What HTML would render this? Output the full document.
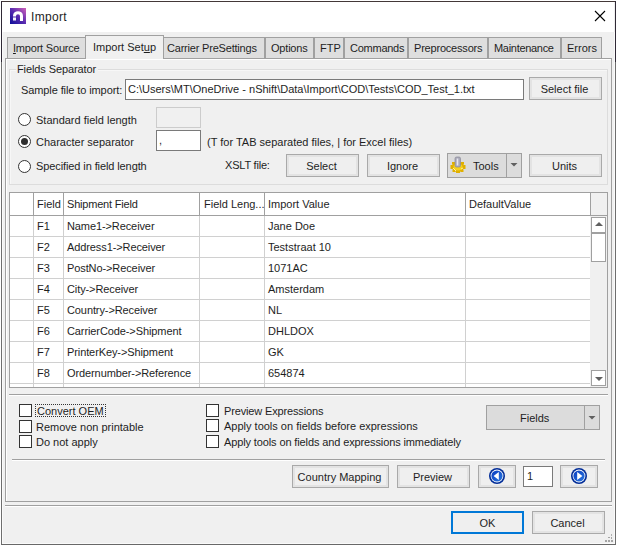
<!DOCTYPE html>
<html><head><meta charset="utf-8">
<style>
*{margin:0;padding:0;box-sizing:border-box}
html,body{width:618px;height:546px;overflow:hidden;background:#fff}
body{position:relative;font-family:"Liberation Sans",sans-serif;font-size:11px;color:#1e1e1e}
.a{position:absolute}
.t{position:absolute;white-space:nowrap;line-height:13px;height:13px;letter-spacing:0px}
.win{position:absolute;left:1px;top:1px;width:615px;height:544px;border:1px solid #6e6e6e;border-top-color:#2b2b2b;background:#f0f0f0}
.title{position:absolute;left:0;top:0;width:613px;height:31px;background:#fff}
.tab{position:absolute;top:37px;height:21px;background:#dedede;border:1px solid #a0a0a0;border-bottom:none}
.tab.sel{top:35px;height:24px;background:#f0f0f0;z-index:3}
.panel{position:absolute;left:5px;top:58px;width:607px;height:444px;border:1px solid #a0a0a0;background:#f0f0f0;box-shadow:inset 1px 1px 0 #fff}
.gb{position:absolute;border:1px solid #dcdcdc;box-shadow:inset 1px 1px 0 #f7f7f7}
.btn{position:absolute;background:#efefef;border:1px solid #a9a9a9;text-align:center;box-shadow:inset 0 0 0 2px #e3e3e3}
.inp{position:absolute;background:#fff;border:1px solid #7a7a7a}
.radio{position:absolute;width:13px;height:13px;border:1px solid #333;border-radius:50%;background:#fff}
.chk{position:absolute;width:13px;height:13px;border:1px solid #333;background:#fff}
.grid{position:absolute;left:9px;top:192px;width:599px;height:196px;border:1px solid #a0a0a0;background:#fff;overflow:hidden}
.vl{position:absolute;width:1px;background:#d0d0d0}
.hl{position:absolute;height:1px;background:#d0d0d0}
</style></head><body>
<div class="a" style="left:1px;top:1px;width:615px;height:544px;background:#f0f0f0"></div>
<div class="a" style="left:1px;top:1px;width:615px;height:1px;background:#433838"></div>
<div class="a" style="left:1px;top:1px;width:1px;height:61px;background:#2f2936"></div>
<div class="a" style="left:615px;top:1px;width:1px;height:61px;background:#2f2936"></div>
<div class="a" style="left:1px;top:62px;width:1px;height:483px;background:#6e6e6e"></div>
<div class="a" style="left:615px;top:62px;width:1px;height:483px;background:#6e6e6e"></div>
<div class="a" style="left:1px;top:544px;width:615px;height:1px;background:#686868"></div>
<div class="a" style="left:2px;top:32px;width:1px;height:512px;background:#fafafa"></div>
<div class="a" style="left:614px;top:32px;width:1px;height:512px;background:#fafafa"></div>
<div class="a" style="left:2px;top:543px;width:613px;height:1px;background:#fafafa"></div>
<div class="a" style="left:2px;top:2px;width:612px;height:30px;background:#fff"></div>
<!-- title icon -->
<svg class="a" style="left:10px;top:8px" width="16" height="16" viewBox="0 0 16 16">
<defs><linearGradient id="ig" x1="1" y1="0" x2="0" y2="1"><stop offset="0" stop-color="#d060b8"/><stop offset="0.5" stop-color="#5a2cb0"/><stop offset="1" stop-color="#0c0c98"/></linearGradient></defs>
<rect width="16" height="16" fill="url(#ig)"/>
<path d="M4.5 8C4.5 3.5 11.5 3.5 11.5 8V13" stroke="#fff" stroke-width="3" fill="none"/><rect x="3" y="7.5" width="3" height="2.3" fill="#fff" opacity="0.5"/><rect x="3" y="9.8" width="3" height="2.7" fill="#fff" opacity="0.95"/></svg>
<div class="t" style="left:31px;top:11px;font-size:12px;letter-spacing:0.3px">Import</div>
<!-- close -->
<svg class="a" style="left:594px;top:10px" width="12" height="12" viewBox="0 0 12 12"><path d="M1 1L11 11M11 1L1 11" stroke="#000" stroke-width="1.1"/></svg>

<!-- panel -->
<div class="panel"></div>
<!-- tabs -->
<div class="tab" style="left:7px;width:79px"><div class="t" style="left:5px;top:4px;letter-spacing:-0.2px"><u>I</u>mport Source</div></div>
<div class="tab sel" style="left:85px;width:79px"><div class="t" style="left:7px;top:5px;letter-spacing:0px">Import Set<u>u</u>p</div></div>
<div class="tab" style="left:163px;width:102px"><div class="t" style="left:3px;top:4px;letter-spacing:-0.2px">Carrier PreSettin<u>g</u>s</div></div>
<div class="tab" style="left:265px;width:49px"><div class="t" style="left:5px;top:4px;letter-spacing:-0.2px">Options</div></div>
<div class="tab" style="left:314px;width:30px"><div class="t" style="left:5px;top:4px">FTP</div></div>
<div class="tab" style="left:344px;width:64px"><div class="t" style="left:5px;top:4px;letter-spacing:-0.25px">Commands</div></div>
<div class="tab" style="left:408px;width:80px"><div class="t" style="left:5px;top:4px;letter-spacing:-0.2px">Preprocessors</div></div>
<div class="tab" style="left:488px;width:73px"><div class="t" style="left:5px;top:4px;letter-spacing:-0.3px">Maintenance</div></div>
<div class="tab" style="left:561px;width:41px"><div class="t" style="left:5px;top:4px">Errors</div></div>

<!-- Fields Separator groupbox -->
<div class="gb" style="left:9px;top:69px;width:599px;height:116px"></div>
<div class="t" style="left:16px;top:63px;padding:0 2px 0 1px;letter-spacing:-0.1px;background:#f0f0f0">Fields Separator</div>
<div class="t" style="left:21px;top:84px;letter-spacing:-0.1px">Sample file to import:</div>
<div class="inp" style="left:125px;top:79px;width:399px;height:21px"><div class="t" style="left:2px;top:3px;letter-spacing:0">C:\Users\MT\OneDrive - nShift\Data\Import\COD\Tests\COD_Test_1.txt</div></div>
<div class="btn" style="left:529px;top:77px;width:73px;height:23px"><div class="t" style="position:static;line-height:21px;height:21px;padding-top:1px;padding-right:2px">Select file</div></div>

<div class="radio" style="left:18px;top:113px"></div>
<div class="t" style="left:36px;top:114px">Standard field length</div>
<div class="a" style="left:156px;top:107px;width:45px;height:21px;border:1px solid #cccccc;background:#f0f0f0"></div>
<div class="radio" style="left:18px;top:135px"><div class="a" style="left:2px;top:2px;width:7px;height:7px;border-radius:50%;background:#2e2e2e"></div></div>
<div class="t" style="left:36px;top:136px">Character separator</div>
<div class="inp" style="left:156px;top:130px;width:45px;height:21px"><div class="t" style="left:2px;top:3px">,</div></div>
<div class="t" style="left:207px;top:136px;letter-spacing:0px">(T for TAB separated files, | for Excel files)</div>
<div class="radio" style="left:18px;top:160px"></div>
<div class="t" style="left:36px;top:160px;letter-spacing:-0.1px">Specified in field length</div>
<div class="t" style="left:225px;top:159px;letter-spacing:-0.2px">XSLT file:</div>
<div class="btn" style="left:286px;top:154px;width:73px;height:23px"><div class="t" style="position:static;line-height:21px;height:21px;padding-top:1px;padding-right:2px">Select</div></div>
<div class="btn" style="left:367px;top:154px;width:73px;height:23px"><div class="t" style="position:static;line-height:21px;height:21px;padding-top:1px;padding-right:2px">Ignore</div></div>
<div class="btn" style="left:447px;top:153px;width:75px;height:25px;background:#dcdcdc;border-color:#a0a0a0;box-shadow:none"></div>
<div class="a" style="left:506px;top:154px;width:1px;height:23px;background:#a0a0a0"></div>
<div class="t" style="left:473px;top:160px">Tools</div>
<svg class="a" style="left:510px;top:163px" width="8" height="4" viewBox="0 0 8 4"><path d="M0.5 0H7.5L4 3.5Z" fill="#606060"/></svg>
<!-- tools icon -->
<svg class="a" style="left:450px;top:156px" width="17" height="18" viewBox="0 0 17 18">
<g fill="#e0b000">
<ellipse cx="8" cy="11" rx="6.3" ry="5"/>
<rect x="0.5" y="9" width="2" height="4"/><rect x="13.5" y="9" width="2" height="4"/>
<rect x="6" y="15" width="4" height="2"/><rect x="2.5" y="14" width="3" height="2"/><rect x="10.5" y="14" width="3" height="2"/>
<rect x="2" y="6" width="3" height="2.5"/><rect x="11" y="6" width="3" height="2.5"/>
</g>
<ellipse cx="8" cy="11" rx="4.5" ry="3.5" fill="#f4d020"/>
<path d="M3 12l3 3M11 13l2-1" stroke="#fff4a0" stroke-width="1"/>
<rect x="5" y="1" width="5.5" height="10" rx="1.5" fill="#a8a8b8" stroke="#8a8a98" stroke-width="0.7"/>
<rect x="6.7" y="2.5" width="1.6" height="7" fill="#e6e6f0"/>
</svg>
<div class="btn" style="left:529px;top:154px;width:73px;height:23px"><div class="t" style="position:static;line-height:21px;height:21px;padding-top:1px;padding-right:2px">Units</div></div>

<!-- grid -->
<div class="grid">
 <div class="a" style="left:580px;top:0;width:17px;height:194px;background:#f0f0f0"></div>
 <div class="hl" style="left:0;top:22px;width:581px;background:#a0a0a0"></div>
 <div class="hl" style="left:580px;top:22px;width:17px;background:#a0a0a0"></div>
 <div class="vl" style="left:23px;top:0;height:22px;background:#a0a0a0"></div>
 <div class="vl" style="left:53px;top:0;height:22px;background:#a0a0a0"></div>
 <div class="vl" style="left:189px;top:0;height:22px;background:#a0a0a0"></div>
 <div class="vl" style="left:254px;top:0;height:22px;background:#a0a0a0"></div>
 <div class="vl" style="left:455px;top:0;height:22px;background:#a0a0a0"></div>
 <div class="vl" style="left:580px;top:0;height:22px;background:#a0a0a0"></div>
 <div class="vl" style="left:23px;top:23px;height:172px"></div>
 <div class="vl" style="left:53px;top:23px;height:172px"></div>
 <div class="vl" style="left:189px;top:23px;height:172px"></div>
 <div class="vl" style="left:254px;top:23px;height:172px"></div>
 <div class="vl" style="left:455px;top:23px;height:172px"></div>
 <div class="hl" style="left:0;top:43px;width:580px"></div>
 <div class="hl" style="left:0;top:64px;width:580px"></div>
 <div class="hl" style="left:0;top:85px;width:580px"></div>
 <div class="hl" style="left:0;top:106px;width:580px"></div>
 <div class="hl" style="left:0;top:127px;width:580px"></div>
 <div class="hl" style="left:0;top:148px;width:580px"></div>
 <div class="hl" style="left:0;top:169px;width:580px"></div>
 <div class="hl" style="left:0;top:190px;width:580px"></div>
 <div class="t" style="left:27px;top:5px">Field</div>
 <div class="t" style="left:57px;top:5px;letter-spacing:-0.2px">Shipment Field</div>
 <div class="t" style="left:194px;top:5px">Field Leng...</div>
 <div class="t" style="left:258px;top:5px">Import Value</div>
 <div class="t" style="left:459px;top:5px">DefaultValue</div>

 <div class="t" style="left:27px;top:27px">F1</div><div class="t" style="left:57px;top:27px;letter-spacing:-0.1px">Name1-&gt;Receiver</div><div class="t" style="left:258px;top:27px">Jane Doe</div>
 <div class="t" style="left:27px;top:48px">F2</div><div class="t" style="left:57px;top:48px;letter-spacing:-0.1px">Address1-&gt;Receiver</div><div class="t" style="left:258px;top:48px">Teststraat 10</div>
 <div class="t" style="left:27px;top:69px">F3</div><div class="t" style="left:57px;top:69px;letter-spacing:-0.1px">PostNo-&gt;Receiver</div><div class="t" style="left:258px;top:69px">1071AC</div>
 <div class="t" style="left:27px;top:90px">F4</div><div class="t" style="left:57px;top:90px;letter-spacing:-0.1px">City-&gt;Receiver</div><div class="t" style="left:258px;top:90px">Amsterdam</div>
 <div class="t" style="left:27px;top:111px">F5</div><div class="t" style="left:57px;top:111px;letter-spacing:-0.1px">Country-&gt;Receiver</div><div class="t" style="left:258px;top:111px">NL</div>
 <div class="t" style="left:27px;top:132px">F6</div><div class="t" style="left:57px;top:132px;letter-spacing:-0.1px">CarrierCode-&gt;Shipment</div><div class="t" style="left:258px;top:132px">DHLDOX</div>
 <div class="t" style="left:27px;top:153px">F7</div><div class="t" style="left:57px;top:153px;letter-spacing:-0.1px">PrinterKey-&gt;Shipment</div><div class="t" style="left:258px;top:153px">GK</div>
 <div class="t" style="left:27px;top:174px">F8</div><div class="t" style="left:57px;top:174px;letter-spacing:-0.1px">Ordernumber-&gt;Reference</div><div class="t" style="left:258px;top:174px">654874</div>
 <!-- scrollbar -->
 <div class="a" style="left:581px;top:24px;width:15px;height:16px;border:1px solid #a0a0a0;background:#fff"></div>
 <svg class="a" style="left:585px;top:29px" width="8" height="4" viewBox="0 0 8 4"><path d="M0 4H8L4 0Z" fill="#606060"/></svg>
 <div class="a" style="left:581px;top:40px;width:15px;height:29px;border:1px solid #a0a0a0;background:#fff"></div>
 <div class="a" style="left:581px;top:177px;width:15px;height:16px;border:1px solid #a0a0a0;background:#fff"></div>
 <svg class="a" style="left:585px;top:184px" width="8" height="4" viewBox="0 0 8 4"><path d="M0 0H8L4 4Z" fill="#606060"/></svg>
</div>

<!-- lower -->
<div class="hl" style="left:9px;top:394px;width:599px;background:#a0a0a0"></div>
<div class="hl" style="left:9px;top:395px;width:599px;background:#fff"></div>
<div class="chk" style="left:19px;top:404px"></div>
<div class="t" style="left:37px;top:405px">Convert OEM</div>
<div class="a" style="left:35px;top:404px;width:71px;height:13px;border:1px dotted #333"></div>
<div class="chk" style="left:19px;top:420px"></div>
<div class="t" style="left:36px;top:421px">Remove non printable</div>
<div class="chk" style="left:19px;top:435px"></div>
<div class="t" style="left:36px;top:436px">Do not apply</div>
<div class="chk" style="left:206px;top:404px"></div>
<div class="t" style="left:224px;top:405px;letter-spacing:-0.15px">Preview Expressions</div>
<div class="chk" style="left:206px;top:419px"></div>
<div class="t" style="left:224px;top:420px">Apply tools on fields before expressions</div>
<div class="chk" style="left:206px;top:435px"></div>
<div class="t" style="left:224px;top:436px;letter-spacing:-0.12px">Apply tools on fields and expressions immediately</div>

<div class="btn" style="left:486px;top:405px;width:114px;height:25px;background:#dcdcdc;border-color:#a0a0a0;box-shadow:none"></div>
<div class="a" style="left:584px;top:406px;width:1px;height:23px;background:#a0a0a0"></div>
<div class="t" style="left:520px;top:412px">Fields</div>
<svg class="a" style="left:588px;top:416px" width="8" height="4" viewBox="0 0 8 4"><path d="M0.5 0H7.5L4 3.5Z" fill="#606060"/></svg>

<div class="hl" style="left:12px;top:459px;width:593px;background:#a0a0a0"></div>
<div class="hl" style="left:12px;top:460px;width:593px;background:#fff"></div>
<div class="btn" style="left:292px;top:465px;width:97px;height:23px"><div class="t" style="position:static;line-height:21px;height:21px;padding-top:1px;padding-right:2px">Country Mapping</div></div>
<div class="btn" style="left:397px;top:465px;width:73px;height:23px"><div class="t" style="position:static;line-height:21px;height:21px;padding-top:1px;padding-right:2px">Preview</div></div>
<div class="btn" style="left:478px;top:465px;width:38px;height:23px"></div>
<svg class="a" style="left:489px;top:468px" width="16" height="16" viewBox="0 0 16 16">
<defs><linearGradient id="bg1" x1="0" y1="0" x2="1" y2="1"><stop offset="0" stop-color="#0a3cc0"/><stop offset="1" stop-color="#2a78e0"/></linearGradient></defs>
<circle cx="8" cy="8" r="8" fill="#002c98"/><circle cx="8" cy="8" r="6.4" fill="#fff"/><circle cx="8" cy="8" r="5.6" fill="url(#bg1)"/>
<path d="M4.6 8L9.8 4V12Z" fill="#fff"/></svg>
<div class="inp" style="left:523px;top:466px;width:30px;height:21px"><div class="t" style="left:3px;top:3px">1</div></div>
<div class="btn" style="left:560px;top:465px;width:38px;height:23px"></div>
<svg class="a" style="left:571px;top:468px" width="16" height="16" viewBox="0 0 16 16">
<circle cx="8" cy="8" r="8" fill="#002c98"/><circle cx="8" cy="8" r="6.4" fill="#fff"/><circle cx="8" cy="8" r="5.6" fill="url(#bg1)"/>
<path d="M11.4 8L6.2 4V12Z" fill="#fff"/></svg>

<!-- bottom separator -->
<div class="hl" style="left:5px;top:505px;width:607px;background:#a0a0a0"></div>
<div class="hl" style="left:5px;top:506px;width:607px;background:#fff"></div>
<div class="btn" style="left:451px;top:511px;width:73px;height:23px;border:2px solid #0078d7;box-shadow:none"><div class="t" style="position:static;line-height:19px;height:19px;padding-top:1px">OK</div></div>
<div class="btn" style="left:532px;top:511px;width:73px;height:23px"><div class="t" style="position:static;line-height:21px;height:21px;padding-top:1px;padding-right:2px">Cancel</div></div>
<!-- grip -->
<div class="a" style="left:605px;top:540px;width:2px;height:2px;background:#a4a4a4"></div>
<div class="a" style="left:608px;top:540px;width:2px;height:2px;background:#a4a4a4"></div>
<div class="a" style="left:611px;top:540px;width:2px;height:2px;background:#a4a4a4"></div>
<div class="a" style="left:608px;top:537px;width:2px;height:1px;background:#a4a4a4"></div>
<div class="a" style="left:611px;top:537px;width:1px;height:2px;background:#a4a4a4"></div>
<div class="a" style="left:611px;top:534px;width:1px;height:2px;background:#b0b0b0"></div>
</body></html>
